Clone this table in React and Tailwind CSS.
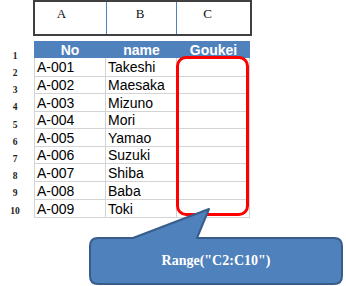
export default function App() {
  const rows = [
    ["A-001", "Takeshi", 19],
    ["A-002", "Maesaka", 17],
    ["A-003", "Mizuno", 18],
    ["A-004", "Mori", 17],
    ["A-005", "Yamao", 18],
    ["A-006", "Suzuki", 17],
    ["A-007", "Shiba", 18],
    ["A-008", "Baba", 18],
    ["A-009", "Toki", 18],
  ];
  const labels = ["1", "2", "3", "4", "5", "6", "7", "8", "9", "10"];
  return (
    <div className="relative w-[346px] h-[286px] bg-white overflow-hidden">
      {/* column letter header */}
      <div
        className="ml-[33px] w-[219px] h-[36px] border-2 border-[#404040] flex"
        style={{ fontFamily: '"Liberation Serif", serif' }}
      >
        <div className="w-[71px] flex items-center justify-center pb-[9px] pr-[18px] text-[13px] leading-[13px] text-[#111]">A</div>
        <div className="w-[1px] bg-[#4f81bd]" />
        <div className="w-[69px] flex items-center justify-center pb-[9px] pr-[3px] text-[13px] leading-[13px] text-[#111]">B</div>
        <div className="w-[1px] bg-[#4f81bd]" />
        <div className="w-[73px] flex items-center justify-center pb-[9px] pr-[12px] text-[13px] leading-[13px] text-[#111]">C</div>
      </div>

      <div className="mt-[5px] flex">
        {/* row numbers */}
        <div
          className="w-[34px] flex flex-col pt-[7px]"
          style={{ fontFamily: '"Liberation Serif", serif' }}
        >
          {labels.map((l) => (
            <div key={l} className="h-[17.2px] pr-[4px] flex items-center justify-center text-[9.5px] font-bold leading-none text-[#222]">
              {l}
            </div>
          ))}
        </div>

        {/* table */}
        <div
          className="flex flex-col"
          style={{ fontFamily: '"Liberation Sans", Arial, sans-serif' }}
        >
          <div className="h-[17px] w-[216px] bg-[#4f81bd] flex text-white font-bold text-[14px] leading-none">
            <div className="w-[72px] flex items-center justify-center">No</div>
            <div className="w-[71px] flex items-center justify-center">name</div>
            <div className="w-[73px] flex items-center justify-center">Goukei</div>
          </div>
          {rows.map(([id, name, h]) => (
            <div
              key={id}
              className="flex text-[14px] leading-none text-black"
              style={{ height: h }}
            >
              <div className="w-[72px] border-l border-r border-b border-[#d4d4d4] pl-[2px] flex items-center">{id}</div>
              <div className="w-[71px] border-r border-b border-[#d4d4d4] pl-[2px] flex items-center">{name}</div>
              <div className="w-[73px] border-r border-b border-[#d4d4d4]" />
            </div>
          ))}
        </div>
      </div>

      {/* red range highlight */}
      <div className="absolute left-[176px] top-[56px] w-[73px] h-[160px] border-[3px] border-[#ff0000] rounded-[10px]" />

      {/* callout */}
      <svg className="absolute left-0 top-0" width="346" height="286" viewBox="0 0 346 286">
        <path
          d="M98,238 L133,238 L209,209 L197,238 L334,238 Q342,238 342,246 L342,276 Q342,284 334,284 L98,284 Q90,284 90,276 L90,246 Q90,238 98,238 Z"
          fill="#4f81bd"
          stroke="#385d8a"
          strokeWidth="2"
          strokeLinejoin="round"
        />
      </svg>
      <div
        className="absolute left-[90px] top-[238px] w-[252px] h-[46px] flex items-center justify-center text-white font-bold text-[14px] leading-none"
        style={{ fontFamily: '"Liberation Serif", serif' }}
      >
        Range("C2:C10")
      </div>
    </div>
  );
}
